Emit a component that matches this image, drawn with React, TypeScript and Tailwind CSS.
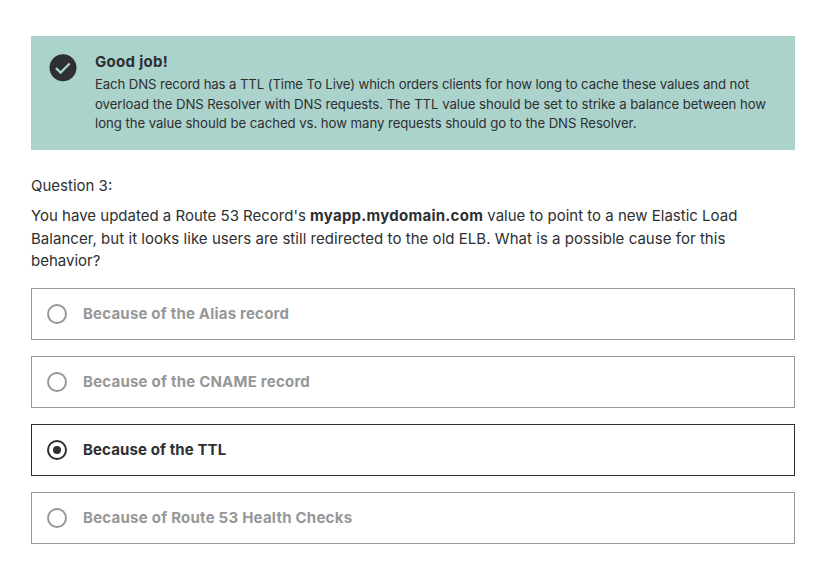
const options = [
  { text: 'Because of the Alias record', spacing: 'tracking-[0.2px]', selected: false },
  { text: 'Because of the CNAME record', spacing: 'tracking-[0.22px]', selected: false },
  { text: 'Because of the TTL', spacing: 'tracking-[0.11px]', selected: true },
  { text: 'Because of Route 53 Health Checks', spacing: 'tracking-[0.24px]', selected: false },
];

export default function App() {
  return (
    <main className="h-[575px] w-[836px] bg-white pt-9 pr-[41px] pl-[31px] font-['Inter','Liberation_Sans',sans-serif] text-[#2d2f31]">
      <section className="flex h-[114px] bg-[#acd2cc] pt-4 pl-[18px]">
        <svg width="28" height="28" viewBox="0 0 28 28" className="mt-0.5 shrink-0">
          <circle cx="14" cy="13.8" r="13.5" fill="#2d2f31" />
          <path d="M6.9 14l4.7 4.6 9.1-9.1" fill="none" stroke="#acd2cc" strokeWidth="2.3" />
        </svg>
        <div className="ml-[18px] whitespace-nowrap">
          <h2 className="text-[15px] leading-[19px] font-bold tracking-[0.3px]">Good job!</h2>
          <p className="mt-1 text-[13.2px] leading-[19.6px]">
            <span className="tracking-[-0.11px]">Each DNS record has a TTL (Time To Live) which orders clients for how long to cache these values and not</span><br />
            <span className="tracking-[-0.05px]">overload the DNS Resolver with DNS requests. The TTL value should be set to strike a balance between how</span><br />
            <span className="tracking-[-0.06px]">long the value should be cached vs. how many requests should go to the DNS Resolver.</span>
          </p>
        </div>
      </section>
      <p className="mt-[25px] text-[15px] leading-[22px]">Question 3:</p>
      <p className="mt-2 text-[15px] leading-[22.5px] whitespace-nowrap">
        You have updated a Route 53 Record's <b className="tracking-[0.26px]">myapp.mydomain.com</b> value to point to a new Elastic Load<br />
        <span className="tracking-[0.04px]">Balancer, but it looks like users are still redirected to the old ELB. What is a possible cause for this</span><br />
        behavior?
      </p>
      <div className="mt-[15.5px] flex flex-col gap-4">
        {options.map((o) => (
          <div
            key={o.text}
            className={`flex h-[52px] items-center border pl-[15px] text-[15px] leading-6 font-bold ${o.selected ? 'border-[#2d2f31]' : 'border-[#969798] text-[#969798]'}`}
          >
            <span className="mr-4 flex size-5 items-center justify-center rounded-full border-2 border-current">
              {o.selected && <span className="size-2 rounded-full bg-current" />}
            </span>
            <span className={o.spacing}>{o.text}</span>
          </div>
        ))}
      </div>
    </main>
  );
}
